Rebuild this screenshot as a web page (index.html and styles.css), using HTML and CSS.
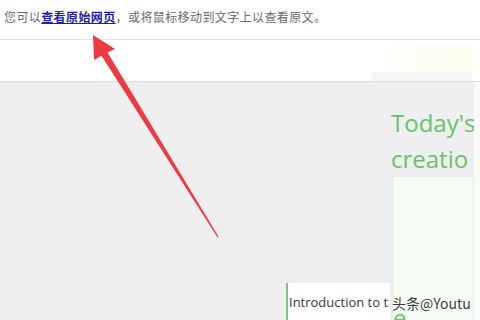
FILE: index.html
```html
<!DOCTYPE html>
<html lang="zh">
<head>
<meta charset="utf-8">
<link rel="stylesheet" href="styles.css">
</head>
<body>
<div class="page">
  <div class="notice">您可以<a class="src-link" href="#">查看原始网页</a>，或将鼠标移动到文字上以查看原文。</div>
  <div class="band">
    <div class="band-deco"></div>
  </div>
  <div class="main">
    <div class="left"></div>
    <div class="mid">
      <div class="intro">Introduction to t</div>
    </div>
    <div class="right">
      <div class="heading">Today's creatio</div>
      <div class="greenbox">
        <div class="sub">e</div>
      </div>
    </div>
    <div class="strip"></div>
  </div>
  <div class="watermark">头条@Youtu</div>
  <svg class="arrow" width="480" height="320" viewBox="0 0 480 320">
    <polygon points="93,35 115,49 107.5,52.6 218.6,236.8 217.6,237.6 101.5,55.8 94,60" fill="#ef3a40"/>
  </svg>
</div>
</body>
</html>
```
FILE: styles.css
```css
html, body {
  margin: 0;
  padding: 0;
  width: 480px;
  height: 320px;
  overflow: hidden;
  background: #ffffff;
}
.page {
  position: relative;
  width: 480px;
  height: 320px;
  display: flex;
  flex-direction: column;
  font-family: "Noto Sans CJK SC", "Liberation Sans", sans-serif;
}
.notice {
  height: 40px;
  box-sizing: border-box;
  padding: 8px 0 0 4px;
  font-size: 12px;
  letter-spacing: 0.4px;
  line-height: 17px;
  color: #6a6a6a;
  border-bottom: 1px solid #e2e2e4;
}
.src-link {
  color: #1e1ea8;
  text-decoration: underline;
  font-weight: bold;
}
.band {
  height: 42px;
  box-sizing: border-box;
  border-bottom: 1px solid #dedee0;
  display: flex;
  justify-content: flex-end;
  background: #ffffff;
}
.band-deco {
  width: 100px;
  margin-right: 8px;
  margin-top: 6px;
  background: linear-gradient(90deg, #ffffff 0%, #fefdf6 40%, #fcfcee 100%);
  border-bottom: 9px solid #f6f6f7;
}
.main {
  flex: 1;
  display: grid;
  grid-template-columns: 286px 104px 84px 6px;
  background: #efeff1;
  overflow: hidden;
}
.left {
  background: #efeff1;
}
.mid {
  display: flex;
  flex-direction: column;
  justify-content: flex-end;
}
.intro {
  height: 37px;
  box-sizing: border-box;
  background: #ffffff;
  border-left: 2px solid #7bc77b;
  padding: 11px 0 0 1px;
  font-family: "Open Sans", "Liberation Sans", sans-serif;
  font-size: 13px;
  line-height: 17px;
  color: #3a3a3a;
  white-space: nowrap;
  overflow: hidden;
}
.right {
  display: flex;
  flex-direction: column;
  min-width: 0;
}
.heading {
  padding: 23px 0 0 1px;
  height: 94px;
  box-sizing: border-box;
  font-family: "Open Sans", "Liberation Sans", sans-serif;
  font-size: 24px;
  line-height: 36px;
  color: #66c466;
  width: 100px;
}
.greenbox {
  flex: 1;
  margin-left: 2px;
  background: #f5fcf4;
  border: 1px solid #e4ede4;
  border-bottom: none;
  display: flex;
  flex-direction: column;
  justify-content: flex-end;
  overflow: hidden;
}
.sub {
  font-family: "Open Sans", "Liberation Sans", sans-serif;
  font-size: 24px;
  line-height: 20px;
  height: 14px;
  color: #66c466;
  padding-left: 0;
  margin-bottom: -2px;
  overflow: hidden;
}
.strip {
  background: #fafcfa;
}
.watermark {
  position: absolute;
  left: 392px;
  top: 294px;
  font-size: 14px;
  line-height: 19px;
  color: #3c3c3c;
  text-shadow: 0 0 2px #ffffff, 0 0 2px #ffffff;
}
.arrow {
  position: absolute;
  left: 0;
  top: 0;
  pointer-events: none;
}
```
